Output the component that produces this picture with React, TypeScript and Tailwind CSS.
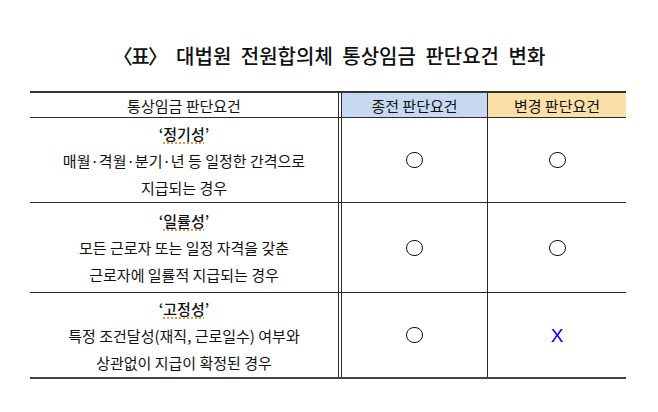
const KR = "font-['Noto_Sans_CJK_KR','Noto_Sans',sans-serif]";

type Row = {
  name: string;
  lines: string[];
  before: boolean;
  after: boolean;
  h: string;
};

const rows: Row[] = [
  {
    name: "정기성",
    lines: ["매월·격월·분기·년 등 일정한 간격으로", "지급되는 경우"],
    before: true,
    after: true,
    h: "h-[85px]",
  },
  {
    name: "일률성",
    lines: ["모든 근로자 또는 일정 자격을 갖춘", "근로자에 일률적 지급되는 경우"],
    before: true,
    after: true,
    h: "h-[90px]",
  },
  {
    name: "고정성",
    lines: ["특정 조건달성(재직, 근로일수) 여부와", "상관없이 지급이 확정된 경우"],
    before: true,
    after: false,
    h: "h-[84px]",
  },
];

function Circle() {
  return <div className="w-[17px] h-[16px] rounded-full border-[1.5px] border-[#111]" />;
}

function Cross() {
  return (
    <span className="font-['Liberation_Sans',sans-serif] text-[19px] leading-none text-[#0000ff]">
      X
    </span>
  );
}

function Mark({ ok }: { ok: boolean }) {
  return ok ? <Circle /> : <Cross />;
}

function BodyRow({ row, last }: { row: Row; last: boolean }) {
  return (
    <div
      className={`flex ${row.h} ${last ? "" : "border-b border-[#2a2a2a]"}`}
    >
      <div className="w-[309px] border-r border-[#2a2a2a] flex flex-col items-center justify-center text-[15px] leading-[27px] text-[#111]">
        <div className="font-medium">
          ‘
          <span className="underline decoration-dotted decoration-[#e0701a] underline-offset-[3px]">
            {row.name}
          </span>
          ’
        </div>
        {row.lines.map((line, i) => (
          <div key={i}>{line}</div>
        ))}
      </div>
      <div className="w-[2px]" />
      <div className="w-[147px] border-x border-[#2a2a2a] flex items-center justify-center">
        <Mark ok={row.before} />
      </div>
      <div className="w-[138px] flex items-center justify-center">
        <Mark ok={row.after} />
      </div>
    </div>
  );
}

export default function App() {
  return (
    <div className={`w-[658px] h-[412px] bg-white ${KR} text-[#111]`}>
      <div className="pt-[44px] h-[91px] text-center text-[20px] leading-[24px] font-medium [word-spacing:5px]">
        <span className="tracking-[-1.5px]">〈표〉</span> 대법원 전원합의체 통상임금 판단요건 변화
      </div>
      <div className="ml-[30px] w-[596px] border-t-2 border-b-2 border-t-[#333] border-b-[#444]">
        <div className="flex h-[25px] border-b border-[#2a2a2a] text-[15px] leading-none">
          <div className="w-[309px] border-r border-[#2a2a2a] flex items-center justify-center">
            통상임금 판단요건
          </div>
          <div className="w-[2px]" />
          <div className="w-[147px] border-x border-[#2a2a2a] bg-[#c6d9f0] flex items-center justify-center">
            종전 판단요건
          </div>
          <div className="w-[138px] bg-[#fadfa7] flex items-center justify-center">
            변경 판단요건
          </div>
        </div>
        {rows.map((row, i) => (
          <BodyRow key={i} row={row} last={i === rows.length - 1} />
        ))}
      </div>
    </div>
  );
}
